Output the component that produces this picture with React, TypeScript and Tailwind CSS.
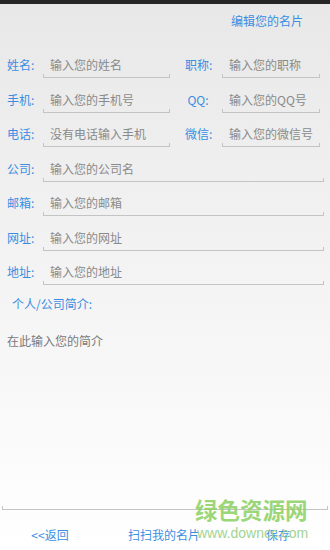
import React from "react";

const font = "font-['Noto_Sans_CJK_SC','Noto_Sans',sans-serif]";

function Field({ text, w }: { text: string; w: string }) {
  return (
    <div className={`flex flex-col ${w}`}>
      <div className="pl-[7px] leading-[16px] text-[#8a8a8a] whitespace-nowrap">{text}</div>
      <div className="mt-[1px] h-[4px] border-x border-b border-[#c4c4c4]" />
    </div>
  );
}

function FullRow({ label, text }: { label: string; text: string }) {
  return (
    <div className="flex h-[34.5px] items-start pt-[9px] pl-[7px]">
      <div className="w-[36px] leading-[16px] text-[#3a8ee2]">{label}</div>
      <Field text={text} w="w-[281px]" />
    </div>
  );
}

function HalfRow({
  l1,
  t1,
  l2,
  t2,
}: {
  l1: string;
  t1: string;
  l2: string;
  t2: string;
}) {
  return (
    <div className="flex h-[34.5px] items-start pt-[9px] pl-[7px]">
      <div className="w-[36px] leading-[16px] text-[#3a8ee2]">{l1}</div>
      <Field text={t1} w="w-[127px]" />
      <div className="ml-[15px] w-[26px] text-center leading-[16px] text-[#3a8ee2] whitespace-nowrap">{l2}</div>
      <div className="ml-[11px]">
        <Field text={t2} w="w-[98px]" />
      </div>
    </div>
  );
}

export default function App() {
  return (
    <div
      className={`relative w-[330px] h-[550px] overflow-hidden flex flex-col bg-gradient-to-b from-[#e8e8e8] to-[#ffffff] text-[12px] ${font}`}
    >
      <div className="h-[4px] bg-[#262626]" />
      <div className="h-[34px] flex items-center justify-end pr-[27px] text-[#3a8ee2] text-[12px]">
        编辑您的名片
      </div>
      <div className="h-[10px]" />
      <HalfRow l1="姓名:" t1="输入您的姓名" l2="职称:" t2="输入您的职称" />
      <HalfRow l1="手机:" t1="输入您的手机号" l2="QQ:" t2="输入您的QQ号" />
      <HalfRow l1="电话:" t1="没有电话输入手机" l2="微信:" t2="输入您的微信号" />
      <FullRow label="公司:" text="输入您的公司名" />
      <FullRow label="邮箱:" text="输入您的邮箱" />
      <FullRow label="网址:" text="输入您的网址" />
      <FullRow label="地址:" text="输入您的地址" />
      <div className="h-[28px] flex items-center pl-[12px] text-[#3a8ee2]">个人/公司简介:</div>
      <div className="flex-1 flex flex-col">
        <div className="flex-1 pt-[15px] pl-[7px] leading-[16px] text-[#7a7a7a]">在此输入您的简介</div>
        <div className="mx-[2px] h-[4px] border-x border-b border-[#c4c4c4]" />
      </div>
      <div className="h-[40px] pt-[10px] flex items-center text-[#3a8ee2]">
        <div className="w-[100px] text-center">&lt;&lt;返回</div>
        <div className="w-[128px] text-center">扫扫我的名片</div>
        <div className="w-[100px] text-center">保存</div>
      </div>
      <div className="absolute left-[195px] top-[495px] w-[115px] whitespace-nowrap text-[22.5px] leading-[28px] font-bold text-[#8ad060]/85 pointer-events-none">
        绿色资源网
      </div>
      <span className="absolute left-[197px] top-[525px] whitespace-nowrap font-['Liberation_Sans'] text-[14px] leading-[16px] text-[#a3d494] pointer-events-none">
        www.downcc.com
      </span>
    </div>
  );
}
